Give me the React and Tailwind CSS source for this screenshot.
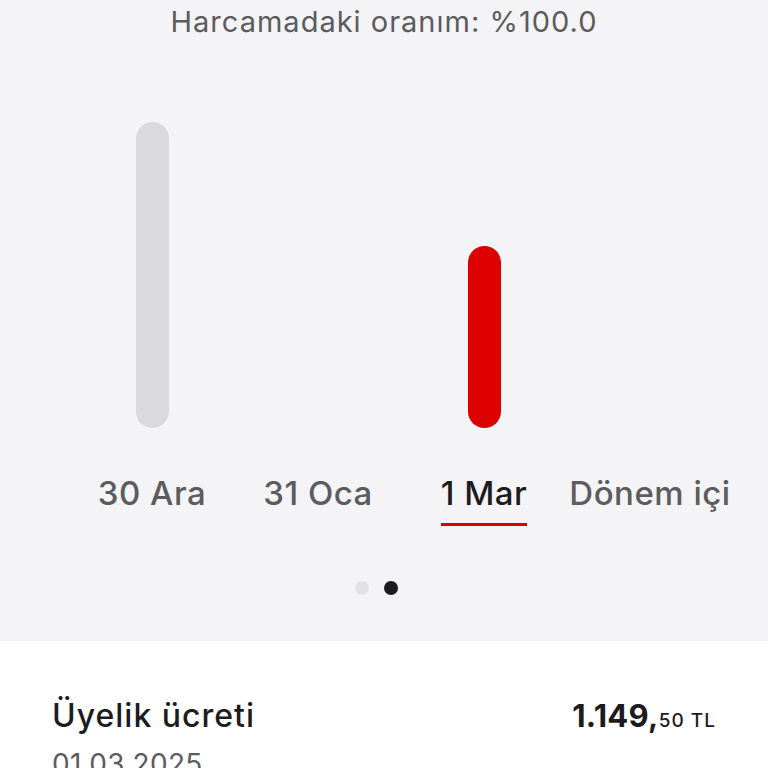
export default function App() {
  const font = { fontFamily: '"Inter", "Noto Sans", sans-serif' };
  const cols = [
    { label: "30 Ara", h: 306, color: "bg-[#d9d9de]" },
    { label: "31 Oca", h: 0 },
    { label: "1 Mar", h: 182, color: "bg-[#dc0000]", active: true },
    { label: "Dönem içi", h: 0 },
  ];
  return (
    <div className="w-[768px] h-[768px] overflow-hidden bg-white" style={font}>
      <div className="bg-[#f4f4f6] h-[641px] flex flex-col">
        <div className="pt-[4px] text-center text-[29px] leading-[36px] text-[#5b5b60] tracking-[1px]">
          Harcamadaki oranım: %100.0
        </div>
        <div className="mt-[82px] pl-[69px] grid grid-cols-[166px_166px_166px_166px] h-[306px] items-end">
          {cols.map((c, i) => (
            <div key={i} className="flex justify-center">
              {c.h > 0 && (
                <div className={`w-[33px] rounded-full ${c.color}`} style={{ height: c.h }} />
              )}
            </div>
          ))}
        </div>
        <div className="mt-[45px] pl-[69px] grid grid-cols-[166px_166px_166px_166px]">
          {cols.map((c, i) => (
            <div key={i} className="flex justify-center">
              <div className="flex flex-col items-center">
                <span
                  className={`text-[33px] leading-[40px] font-medium tracking-[0.5px] whitespace-nowrap ${c.active ? "text-[#1c1c1e]" : "text-[#5b5b60]"}`}
                >
                  {c.label}
                </span>
                <div className={`mt-[10px] h-[3px] w-full ${c.active ? "bg-[#d40000]" : "bg-transparent"}`} />
              </div>
            </div>
          ))}
        </div>
        <div className="mt-[55px] flex justify-center gap-[15px] pr-[15px]">
          <div className="w-[14px] h-[14px] rounded-full bg-[#e2e2e6]" />
          <div className="w-[14px] h-[14px] rounded-full bg-[#1c1c1e]" />
        </div>
      </div>
      <div className="px-[52px] pt-[52px]">
        <div className="flex justify-between items-baseline">
          <span className="text-[32px] leading-[40px] font-medium tracking-[1px] text-[#1c1c1e]">Üyelik ücreti</span>
          <span className="text-[#1c1c1e] whitespace-nowrap">
            <span className="text-[31px] font-bold tracking-[0.3px]">1.149,</span>
            <span className="text-[19px] font-medium tracking-[1px]">50 TL</span>
          </span>
        </div>
        <div className="mt-[6px] text-[28px] leading-[36px] tracking-[0.3px] text-[#5b5b60]">01.03.2025</div>
      </div>
    </div>
  );
}
